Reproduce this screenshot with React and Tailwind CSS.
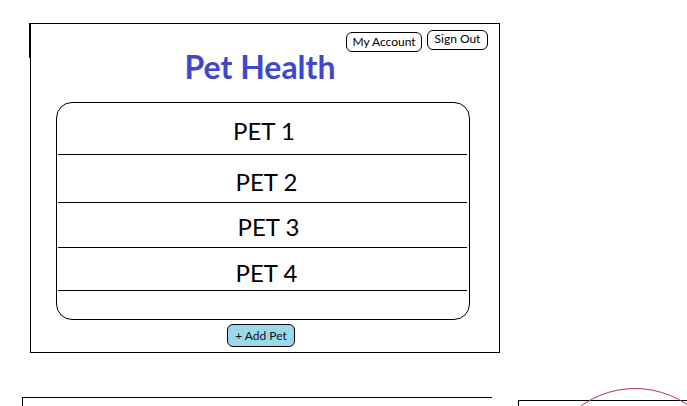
export default function App() {
  const rows = [
    { label: "PET 1", h: "h-[52px]", pt: "pt-[16px]", pl: "pl-[3px]" },
    { label: "PET 2", h: "h-[48px]", pt: "pt-[15px]", pl: "pl-[8px]" },
    { label: "PET 3", h: "h-[45px]", pt: "pt-[12px]", pl: "pl-[12px]" },
    { label: "PET 4", h: "h-[43px]", pt: "pt-[13px]", pl: "pl-[8px]" },
  ];
  return (
    <div className="relative w-[687px] h-[406px] overflow-hidden bg-white font-['Lato',sans-serif] text-black">
      <div className="relative mt-[23px] ml-[30px] w-[470px] h-[330px] border border-black flex flex-col">
        <div className="absolute left-[-2px] top-[-1px] w-[2px] h-[35px] bg-black" />
        <div className="h-[25px] flex justify-end items-start gap-[5px] pr-[11px]">
          <div className="mt-[8px] w-[76px] h-[20px] rounded-[6px] border border-black flex items-center justify-center text-[12px] leading-none">
            My Account
          </div>
          <div className="mt-[6px] w-[61px] h-[20px] rounded-[6px] border border-black flex items-start justify-center pt-[2px] text-[12px] leading-none">
            Sign Out
          </div>
        </div>
        <div className="h-[36px] pr-[10px] text-center text-[32px] leading-[36px] font-bold text-[#3f48cc]">
          Pet Health
        </div>
        <div className="mt-[17px] ml-[25px] w-[414px] h-[218px] rounded-[16px] border border-black flex flex-col">
          {rows.map((r) => (
            <div key={r.label} className={`${r.h} ml-[1px] mr-[2px] border-b border-black`}>
              <div className={`${r.pt} ${r.pl} text-center text-[24px] leading-[24px]`}>{r.label}</div>
            </div>
          ))}
        </div>
        <div className="mt-[4px] ml-[196px] w-[68px] h-[23px] rounded-[6px] border border-black bg-[#99d9ea] flex items-center justify-center text-[12px] leading-none text-[#111]">
          + Add Pet
        </div>
      </div>
      <div className="flex items-start mt-[44px]">
        <div className="shrink-0 ml-[22px] w-[470px] h-[20px] border-t border-l border-black" />
        <div className="shrink-0 mt-[3px] ml-[26px] w-[200px] h-[20px] border-t border-l border-black" />
      </div>
      <div className="absolute left-[542px] top-[388px] w-[186px] h-[186px] rounded-full border border-[#b8324f]" />
    </div>
  );
}
